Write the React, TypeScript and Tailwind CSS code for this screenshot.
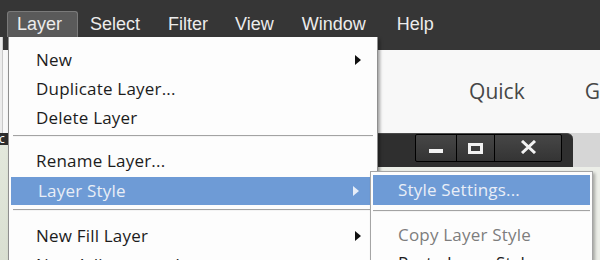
import React from "react";

const MENU_FONT = { fontFamily: '"Open Sans", "Noto Sans", sans-serif' };
const BAR_FONT = { fontFamily: '"Liberation Sans", Arial, sans-serif' };

function Arrow({ light = false }: { light?: boolean }) {
  return (
    <svg width="6" height="10" viewBox="0 0 6 10" className="absolute right-[16px] top-1/2 -translate-y-1/2">
      <polygon points="0,0 6,5 0,10" fill={light ? "#e6edf8" : "#111"} />
    </svg>
  );
}

function Item({
  label,
  arrow = false,
  active = false,
  muted = false,
  h = "h-[29px]",
}: {
  label: string;
  arrow?: boolean;
  active?: boolean;
  muted?: boolean;
  h?: string;
}) {
  return (
    <div
      className={`relative flex items-center pl-[27px] text-[17px] tracking-[0.2px] ${h} ${
        active ? "mx-[2px] bg-[#6e9bd6] pl-[25px] text-[#e9eef7]" : muted ? "text-[#7d7d7d]" : "text-[#1c1c1c]"
      }`}
    >
      {label}
      {arrow && <Arrow light={active} />}
    </div>
  );
}

function Sep({ className = "" }: { className?: string }) {
  return <div className={`mx-[4px] h-[2px] border-t border-[#a3a3a3] bg-[#f4f4f4] ${className}`} />;
}

function WinButtons() {
  return (
    <div className="flex h-[28px] w-[147px] overflow-hidden rounded-[2px] border border-black bg-gradient-to-b from-[#474747] to-[#343434]">
      <div className="flex w-[41px] items-end justify-center border-r border-black pb-[8px]">
        <div className="h-[4px] w-[14px] bg-[#f2f2f2]" />
      </div>
      <div className="flex w-[38px] items-center justify-center border-r border-black">
        <div className="h-[11px] w-[15px] border-[3px] border-[#f2f2f2]" />
      </div>
      <div className="flex flex-1 items-center justify-center pb-[3px]">
        <svg width="17" height="14" viewBox="0 0 17 14">
          <path d="M2 1 L15 13 M15 1 L2 13" stroke="#f2f2f2" strokeWidth="3" />
        </svg>
      </div>
    </div>
  );
}

export default function App() {
  return (
    <div className="relative h-[260px] w-[600px] overflow-hidden bg-[#f7f7f7]" style={MENU_FONT}>
      {/* menu bar */}
      <div className="flex h-[37px] items-end bg-[#363636] pl-[7px] text-[18px] text-[#ececec]" style={BAR_FONT}>
        <div className="flex h-[26px] w-[71px] items-center rounded-t-[3px] border border-b-0 border-[#7a7a7a] bg-[#5a5a5a] pl-[9px]">
          Layer
        </div>
        <div className="flex h-[26px] items-center">
          <span className="ml-[12px]">Select</span>
          <span className="ml-[28px]">Filter</span>
          <span className="ml-[27px]">View</span>
          <span className="ml-[28px]">Window</span>
          <span className="ml-[31px]">Help</span>
        </div>
      </div>

      {/* upper panel area */}
      <div className="flex h-[96px]">
        <div className="w-[8px] border-r border-[#c9c9c9] bg-[#ececec]" />
        <div className="flex flex-1 flex-col">
          <div className="h-[13px] bg-[#363636]" />
          <div className="flex flex-1 items-center bg-[#f8f8f8] pl-[466px] text-[21px] text-[#474747]">
            <span>Quick</span>
            <span className="ml-[60px]">G</span>
          </div>
        </div>
      </div>

      {/* document windows */}
      <div className="flex h-[127px]">
        <div className="flex w-[8px] flex-col">
          <div className="flex h-[12px] items-center overflow-hidden bg-[#2d2d2d] text-[12px] leading-none text-white">
            <span className="-ml-[1px]">c</span>
          </div>
          <div className="flex-1 bg-gradient-to-b from-[#e3e8dc] to-[#d9dfd1]" />
        </div>
        <div className="flex flex-1 flex-col bg-[#d6d6d6]">
          <div className="flex h-[34px]">
            <div className="flex w-[565px] items-start justify-end rounded-tr-[6px] border-t border-[#4a4a4a] bg-[#2f2f2f] pr-[11px]">
              <WinButtons />
            </div>
            <div className="flex-1" />
          </div>
          <div className="flex-1 bg-[#eceee8]" />
        </div>
      </div>

      {/* Layer menu */}
      <div className="absolute left-[8px] top-[37px] h-[240px] w-[370px] border-l border-r border-[#8f8f8f] bg-[#fdfdfd] pt-[8px] shadow-[2px_2px_3px_rgba(0,0,0,0.35)]">
        <Item label="New" arrow />
        <Item label="Duplicate Layer..." />
        <Item label="Delete Layer" />
        <Sep className="mt-[3px]" />
        <Item label="Rename Layer..." h="h-[30px] mt-[9px]" />
        <Item label="Layer Style" arrow active h="h-[28px] mt-[1px]" />
        <Sep className="mt-[4px]" />
        <Item label="New Fill Layer" arrow h="h-[28px] mt-[11px]" />
        <Item label="New Adjustment Layer" arrow />
      </div>

      {/* Layer Style submenu */}
      <div className="absolute left-[370px] top-[171px] h-[110px] w-[223px] border border-[#a5a5a5] bg-[#fdfdfd] pt-[3px] shadow-[2px_2px_3px_rgba(0,0,0,0.3)]">
        <div className="mx-[2px] flex h-[30px] items-center bg-[#6e9bd6] pl-[25px] text-[17px] tracking-[0.2px] text-[#e9eef7]">
          Style Settings...
        </div>
        <div className="mx-[2px] mt-[5px] h-[2px] border-t border-[#a3a3a3] bg-[#f4f4f4]" />
        <div className="mt-[9px] flex h-[28px] items-center pl-[27px] text-[17px] tracking-[0.2px] text-[#7d7d7d]">
          Copy Layer Style
        </div>
        <div className="flex h-[28px] items-center pl-[27px] text-[17px] tracking-[0.2px] text-[#1c1c1c]">
          Paste Layer Style
        </div>
      </div>
    </div>
  );
}
